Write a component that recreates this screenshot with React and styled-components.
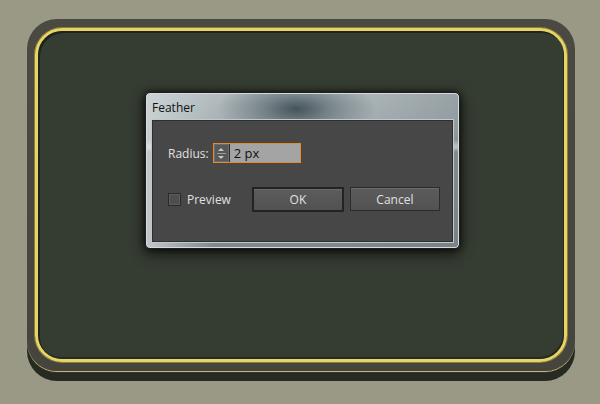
import React from "react";
import styled, { createGlobalStyle } from "styled-components";

const GlobalStyle = createGlobalStyle`
  html, body {
    margin: 0;
    padding: 0;
    background: #9a9986;
  }
  body {
    font-family: "Open Sans", "Noto Sans", sans-serif;
  }
`;

const Page = styled.div`
  width: 600px;
  height: 404px;
  box-sizing: border-box;
  padding: 19px 0 0 27px;
  background: #9a9986;
  overflow: hidden;
`;

const Bezel = styled.div`
  width: 548px;
  height: 352px;
  box-sizing: border-box;
  padding: 9px 8px;
  border-radius: 30px;
  background: linear-gradient(180deg, #4a4a42 0%, #45453d 100%);
  box-shadow: 0 1px 0 #c4b570, 0 2px 0 #33362c, 0 10px 0 #262a21;
`;

const Ring = styled.div`
  width: 100%;
  height: 100%;
  box-sizing: border-box;
  border-radius: 27px;
  border: 3px solid #e6d468;
  box-shadow: 0 0 0 1px #8f7f35, inset 0 0 0 1px #b8a64a;
  overflow: hidden;
`;

const Field = styled.div`
  width: 100%;
  height: 100%;
  box-sizing: border-box;
  border-radius: 24px;
  background: #353c31;
  box-shadow: inset 2px 2px 0 #1f241c, inset -1px -2px 0 #262b22;
  padding: 61px 0 0 107px;
`;

const Dialog = styled.div`
  width: 315px;
  height: 157px;
  box-sizing: border-box;
  border-radius: 5px;
  border: 1px solid #1c1f1e;
  display: flex;
  flex-direction: column;
  padding: 0 5px 5px 5px;
  background:
    radial-gradient(ellipse 80px 34px at 48% 16px, rgba(62, 78, 85, 0.95), rgba(62, 78, 85, 0.5) 40%, rgba(62, 78, 85, 0) 100%),
    linear-gradient(90deg, rgba(210, 216, 218, 0.8) 0%, rgba(205, 212, 214, 0) 22%, rgba(120, 132, 137, 0) 60%, rgba(110, 122, 127, 0.4) 100%),
    linear-gradient(180deg, #b4bdc0 0%, #a6b0b4 24%, #9ba6aa 30%, #e6ecee 34%, #f0f3f4 35%, #8c979b 38%, #7e898d 100%);
  box-shadow: inset 0 0 0 1px #d5dbdd, 0 4px 14px rgba(0, 0, 0, 0.75), 0 0 6px rgba(0, 0, 0, 0.6);
`;

const Title = styled.div`
  height: 26px;
  display: flex;
  align-items: center;
  padding-left: 1px;
  padding-top: 3px;
  box-sizing: border-box;
  font-size: 12px;
  color: #111;
`;

const Panel = styled.div`
  flex: 1;
  box-sizing: border-box;
  background: #474747;
  border: 1px solid #c2c8ca;
  box-shadow: inset 0 0 0 1px #2e3030;
  padding: 23px 0 0 16px;
  display: flex;
  flex-direction: column;
  gap: 24px;
`;

const Row = styled.div`
  display: flex;
  align-items: center;
`;

const Label = styled.span`
  font-size: 12px;
  color: #e0e0e0;
  margin-right: ${p => p.gap || 0}px;
`;

const Spinner = styled.div`
  width: 88px;
  height: 20px;
  box-sizing: border-box;
  border: 1px solid #e88a2a;
  display: flex;
  background: #a4a4a4;
`;

const Arrows = styled.div`
  width: 15px;
  display: flex;
  flex-direction: column;
  align-items: center;
  justify-content: center;
  gap: 2px;
  background: #585858;
  border-right: 1px solid #2e2e2e;
  box-shadow: inset 0 0 0 1px #6c6c6c;
`;

const Tri = styled.span`
  width: 0;
  height: 0;
  border-left: 3px solid transparent;
  border-right: 3px solid transparent;
  ${p => (p.down ? "border-top: 3px solid #c8c8c8;" : "border-bottom: 3px solid #c8c8c8;")}
`;

const Divider = styled.span`
  width: 9px;
  height: 1px;
  background: #9a9a9a;
`;

const Value = styled.span`
  font-size: 13px;
  color: #111;
  padding-left: 4px;
  line-height: 18px;
`;

const Check = styled.span`
  width: 11px;
  height: 11px;
  border: 1px solid #2a2a2a;
  background: #4e4e4e;
  box-shadow: inset 0 0 0 1px #5c5c5c;
  margin-right: 6px;
`;

const Button = styled.button`
  width: ${p => p.w}px;
  height: ${p => (p.primary ? 25 : 24)}px;
  box-sizing: border-box;
  margin-left: ${p => p.ml}px;
  font-family: inherit;
  font-size: 12px;
  color: #e0e0e0;
  background: linear-gradient(180deg, #5c5c5c 0%, #525252 100%);
  border: ${p => (p.primary ? "2px solid #232323" : "1px solid #2c2c2c")};
  box-shadow: inset 0 1px 0 #6a6a6a;
  padding: 0;
  align-self: flex-start;
`;

export default function App() {
  return (
    <>
      <GlobalStyle />
      <Page>
        <Bezel>
          <Ring>
            <Field>
              <Dialog>
                <Title>Feather</Title>
                <Panel>
                  <Row>
                    <Label gap={4}>Radius:</Label>
                    <Spinner>
                      <Arrows>
                        <Tri />
                        <Divider />
                        <Tri down />
                      </Arrows>
                      <Value>2 px</Value>
                    </Spinner>
                  </Row>
                  <Row>
                    <Check />
                    <Label>Preview</Label>
                    <Button primary w={92} ml={21}>OK</Button>
                    <Button w={90} ml={6}>Cancel</Button>
                  </Row>
                </Panel>
              </Dialog>
            </Field>
          </Ring>
        </Bezel>
      </Page>
    </>
  );
}
